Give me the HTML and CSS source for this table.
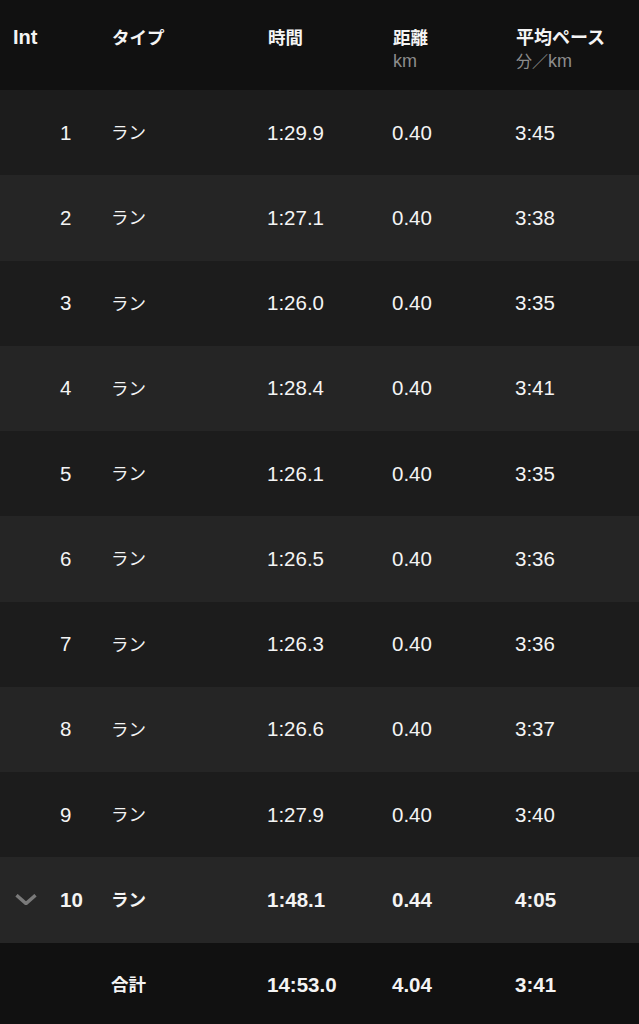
FILE: index.html
```html
<!DOCTYPE html>
<html lang="ja">
<head>
  <meta charset="UTF-8" />
  <meta name="viewport" content="width=device-width, initial-scale=1.0" />
  <title>インターバル</title>
  <link rel="stylesheet" href="styles.css">
</head>
<body>
  <div class="laps-table">
    <div class="row head">
      <div class="cell">Int</div>
      <div class="cell"><span class="ja">タイプ</span></div>
      <div class="cell"><span class="ja">時間</span></div>
      <div class="cell"><span class="ja">距離</span><span class="unit">km</span></div>
      <div class="cell"><span class="ja">平均ペース</span><span class="unit"><span class="ja-unit">分／</span>km</span></div>
    </div>

    <div class="row lap">
      <div class="cell num"><span class="chev"></span>1</div>
      <div class="cell"><span class="ja">ラン</span></div>
      <div class="cell">1:29.9</div>
      <div class="cell">0.40</div>
      <div class="cell">3:45</div>
    </div>
    <div class="row lap">
      <div class="cell num"><span class="chev"></span>2</div>
      <div class="cell"><span class="ja">ラン</span></div>
      <div class="cell">1:27.1</div>
      <div class="cell">0.40</div>
      <div class="cell">3:38</div>
    </div>
    <div class="row lap">
      <div class="cell num"><span class="chev"></span>3</div>
      <div class="cell"><span class="ja">ラン</span></div>
      <div class="cell">1:26.0</div>
      <div class="cell">0.40</div>
      <div class="cell">3:35</div>
    </div>
    <div class="row lap">
      <div class="cell num"><span class="chev"></span>4</div>
      <div class="cell"><span class="ja">ラン</span></div>
      <div class="cell">1:28.4</div>
      <div class="cell">0.40</div>
      <div class="cell">3:41</div>
    </div>
    <div class="row lap">
      <div class="cell num"><span class="chev"></span>5</div>
      <div class="cell"><span class="ja">ラン</span></div>
      <div class="cell">1:26.1</div>
      <div class="cell">0.40</div>
      <div class="cell">3:35</div>
    </div>
    <div class="row lap">
      <div class="cell num"><span class="chev"></span>6</div>
      <div class="cell"><span class="ja">ラン</span></div>
      <div class="cell">1:26.5</div>
      <div class="cell">0.40</div>
      <div class="cell">3:36</div>
    </div>
    <div class="row lap">
      <div class="cell num"><span class="chev"></span>7</div>
      <div class="cell"><span class="ja">ラン</span></div>
      <div class="cell">1:26.3</div>
      <div class="cell">0.40</div>
      <div class="cell">3:36</div>
    </div>
    <div class="row lap">
      <div class="cell num"><span class="chev"></span>8</div>
      <div class="cell"><span class="ja">ラン</span></div>
      <div class="cell">1:26.6</div>
      <div class="cell">0.40</div>
      <div class="cell">3:37</div>
    </div>
    <div class="row lap">
      <div class="cell num"><span class="chev"></span>9</div>
      <div class="cell"><span class="ja">ラン</span></div>
      <div class="cell">1:27.9</div>
      <div class="cell">0.40</div>
      <div class="cell">3:40</div>
    </div>
    <div class="row lap current">
      <div class="cell num">
        <svg class="chev" viewBox="0 0 22 11" width="22" height="11">
          <polyline points="1.5,1.2 11,9.6 20.5,1.2" fill="none" stroke="#7a7a7a" stroke-width="3.4" />
        </svg>10
      </div>
      <div class="cell"><span class="ja">ラン</span></div>
      <div class="cell">1:48.1</div>
      <div class="cell">0.44</div>
      <div class="cell">4:05</div>
    </div>

    <div class="row total">
      <div class="cell"></div>
      <div class="cell"><span class="ja">合計</span></div>
      <div class="cell">14:53.0</div>
      <div class="cell">4.04</div>
      <div class="cell">3:41</div>
    </div>
  </div>
</body>
</html>
```

FILE: styles.css
```css
body {
  margin: 0;
  background: #111111;
  color: #f4f4f4;
  font-family: "Liberation Sans", "Noto Sans CJK JP", sans-serif;
}

.laps-table {
  width: 639px;
}

.row {
  display: grid;
  grid-template-columns: 99px 156px 125px 123px 1fr;
  align-items: center;
  padding-left: 12px;
  font-size: 20.5px;
  line-height: 24px;
}

.ja {
  font-size: 17.5px;
}

.head {
  height: 90px;
  box-sizing: border-box;
  align-items: start;
  padding-top: 25px;
  background: #111111;
  font-size: 20px;
  font-weight: bold;
}

.head .cell {
  margin-left: 1px;
}

.head .cell:last-child .ja {
  font-size: 18px;
}

.unit {
  display: block;
  color: #8c8c8c;
  font-size: 18px;
  line-height: 22px;
  font-weight: normal;
}

.ja-unit {
  font-size: 16px;
}

.lap {
  height: 85.25px;
}

.lap:nth-child(even) {
  background: #1c1c1c;
}

.lap:nth-child(odd) {
  background: #252525;
}

.lap.current {
  background: #262626;
  font-weight: bold;
}

.num {
  display: flex;
  align-items: center;
}

.chev {
  display: block;
  width: 22px;
  height: 11px;
  margin-left: 3px;
  margin-right: 23px;
}

.total {
  height: 81.5px;
  box-sizing: border-box;
  padding-top: 3px;
  background: #111111;
  font-weight: bold;
}
```
